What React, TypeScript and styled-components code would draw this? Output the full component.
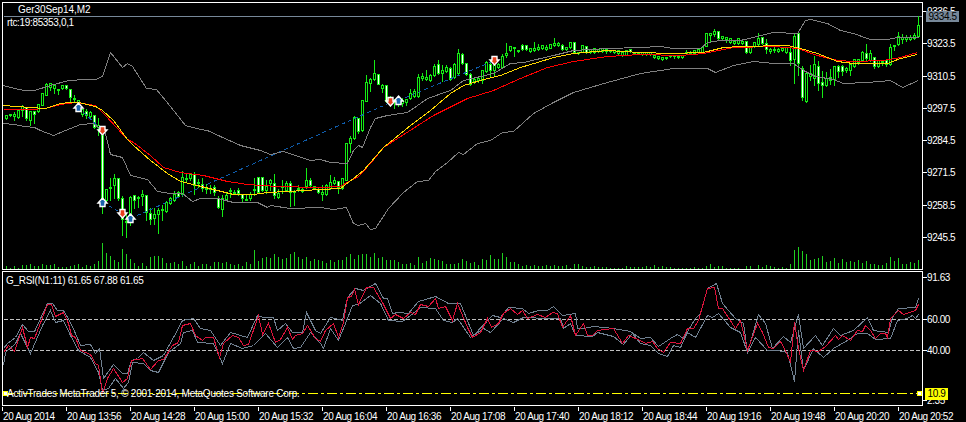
import styled, { createGlobalStyle } from "styled-components";

type Candle = [number, number, number, number, number]

// every bar is 4px wide, first one sits on x=6. [wick top, body top, body bottom, wick bottom, white body]
const candles: Candle[] = [
  [114,115,118,119,0],[114,114,115,116,0],[111,114,116,120,0],[110,110,117,118,0],[104,106,110,116,0],
  [106,107,118,120,1],[110,111,120,125,0],[110,111,114,123,1],[103,104,111,112,0],[93,93,105,105,0],
  [82,84,95,95,0],[82,83,87,90,0],[83,85,88,93,0],[88,89,90,94,0],[84,85,88,89,0],
  [84,85,88,89,1],[89,89,97,102,1],[94,98,99,101,0],[100,100,104,106,0],[108,109,114,116,0],
  [108,111,115,118,1],[110,112,116,118,0],[114,115,127,128,1],[117,125,127,135,0],[127,135,200,213,1],
  [189,189,200,202,0],[177,187,188,200,0],[173,178,185,198,0],[177,178,198,200,1],[195,198,219,235,1],
  [213,221,222,237,0],[195,197,215,225,0],[195,195,200,208,1],[195,197,198,207,0],[189,194,196,205,0],
  [194,195,212,220,1],[207,213,219,224,1],[207,214,218,224,0],[207,210,214,233,0],[204,209,210,220,0],
  [200,202,211,212,0],[196,198,203,204,0],[190,194,200,201,0],[190,192,196,197,1],[170,177,194,196,0],
  [172,178,179,181,0],[172,174,178,180,0],[171,174,185,194,1],[178,182,183,187,0],[177,184,188,191,1],
  [183,188,189,193,0],[184,188,189,193,0],[184,187,192,195,1],[195,198,207,208,1],[194,198,209,216,0],
  [192,195,199,200,0],[187,190,191,197,0],[189,192,193,194,0],[187,190,193,195,1],[193,194,198,201,1],
  [193,199,200,200,0],[191,194,198,200,0],[177,189,190,195,0],[176,177,192,193,1],[176,177,190,191,1],
  [179,186,190,193,0],[178,180,183,190,0],[173,183,195,198,1],[188,193,197,198,0],[179,186,187,193,0],
  [180,183,190,191,0],[180,183,192,206,1],[189,191,192,205,0],[184,188,189,191,0],[187,189,191,192,0],
  [167,180,186,188,0],[177,180,185,186,1],[185,186,188,189,1],[187,189,192,193,1],[184,192,194,200,0],
  [183,185,194,195,0],[174,182,188,189,0],[176,180,183,184,0],[180,181,187,193,1],[177,178,188,189,0],
  [142,143,180,180,0],[135,138,143,152,0],[115,117,138,139,0],[117,118,131,133,1],[100,100,130,131,0],
  [74,82,101,101,0],[77,79,83,91,0],[59,73,79,80,0],[73,74,84,84,1],[83,85,88,92,0],
  [85,85,101,102,1],[95,99,104,106,0],[98,101,102,108,0],[96,100,102,106,0],[97,100,103,106,0],
  [98,99,102,105,0],[88,93,98,99,0],[88,91,96,97,0],[73,77,96,97,0],[72,76,78,80,0],
  [69,77,79,80,0],[73,75,80,81,0],[63,66,75,76,0],[59,64,73,74,1],[64,70,73,81,0],
  [64,67,71,72,0],[66,68,79,80,1],[62,64,77,78,0],[48,53,73,74,0],[52,54,63,64,1],
  [62,63,74,75,1],[72,74,84,85,1],[76,79,81,83,0],[76,78,80,82,0],[70,70,80,83,0],
  [60,62,71,72,0],[60,64,70,76,1],[60,65,70,75,0],[62,64,67,68,0],[53,56,67,68,0],
  [42,53,55,57,0],[45,46,50,51,0],[46,47,48,56,0],[49,50,51,52,0],[43,45,49,50,1],
  [44,45,49,50,1],[47,48,51,52,0],[41,48,50,51,0],[43,47,49,50,0],[44,45,48,49,0],
  [44,47,49,50,0],[43,44,48,48,0],[37,43,45,46,0],[41,43,45,46,0],[43,45,49,50,1],
  [46,47,49,50,0],[41,42,47,48,0],[41,42,52,52,1],[51,52,53,54,0],[44,45,52,52,0],
  [45,46,52,53,1],[48,49,52,53,0],[47,48,52,53,0],[48,49,51,52,0],[47,48,51,52,0],
  [48,49,51,53,0],[49,50,51,52,0],[49,50,52,53,0],[50,50,53,55,0],[51,52,55,56,0],
  [50,50,55,55,0],[48,49,51,52,1],[51,52,53,53,0],[51,52,53,54,0],[51,52,54,55,0],
  [51,52,54,55,0],[51,52,54,55,0],[54,55,57,58,0],[55,56,58,59,0],[56,57,59,60,0],
  [56,57,58,59,0],[54,55,56,57,0],[54,55,56,58,0],[55,56,57,58,0],[54,55,57,58,0],
  [49,52,53,54,0],[50,53,54,54,0],[49,50,53,54,0],[48,49,52,53,0],[46,47,52,53,0],
  [33,33,46,46,0],[33,33,35,41,0],[28,31,34,36,0],[30,31,38,39,1],[35,36,38,40,0],
  [36,37,39,42,0],[37,38,42,43,0],[40,41,43,44,0],[38,38,43,44,0],[40,41,43,44,0],
  [40,41,52,53,1],[46,47,52,53,0],[41,42,46,47,0],[32,38,44,45,0],[36,37,43,44,1],
  [38,43,49,53,1],[47,49,51,53,0],[46,49,50,52,0],[47,49,51,52,0],[46,48,50,51,0],
  [46,47,52,53,0],[47,52,60,65,1],[33,36,59,83,0],[32,33,63,75,1],[65,68,97,100,1],
  [72,73,101,102,0],[64,73,76,80,0],[55,64,78,85,0],[60,66,83,90,1],[70,82,85,97,1],
  [71,78,85,86,0],[68,77,80,84,0],[65,66,79,85,0],[64,66,71,77,1],[64,66,71,75,1],
  [66,68,70,72,0],[62,64,70,75,0],[58,59,66,67,0],[58,59,62,64,0],[50,52,60,61,0],
  [43,53,58,61,1],[49,53,60,61,0],[57,57,66,68,1],[59,60,66,67,0],[60,61,62,65,0],
  [59,60,64,66,1],[43,47,64,65,0],[44,45,46,50,0],[31,36,44,45,0],[33,37,39,43,0],
  [34,37,39,41,0],[34,37,39,40,0],[32,35,38,39,0],[15,25,36,37,0],
]

const volumes = [
  3,1,3,1,4,4,5,3,3,5,4,4,5,2,2,2,3,4,5,2,4,3,5,8,
  26,16,13,9,7,20,15,10,6,3,6,3,12,13,13,11,6,6,7,5,8,3,5,7,3,5,5,3,7,7,6,7,5,4,5,3,7,5,19,8,11,12,11,15,12,10,11,15,17,12,10,12,8,10,9,
  8,6,9,7,9,9,12,15,10,14,15,15,12,16,11,12,9,9,9,7,5,5,6,4,12,6,8,11,10,9,8,5,5,5,6,10,8,6,7,4,10,9,14,10,10,16,12,7,7,5,3,4,3,4,3,3,4,3,4,3,3,4,1,5,5,3,2,2,3,2,2,2,1,1,1,1,3,2,2,2,
  2,3,2,4,2,3,2,2,1,1,1,1,1,2,1,1,3,5,2,3,3,1,1,1,1,0,3,3,0,4,2,4,3,2,1,2,1,5,19,22,18,15,9,10,11,13,7,8,11,6,10,7,8,7,9,6,8,5,5,4,4,6,12,8,11,5,5,7,6,9,
]

const upperBand = "3,85 14,88 24,90 34,90 50,85 68,80 85,79 95,79 102,76 110,52 122,67 127,63 132,66 146,88 156,89 170,106 185,125 200,129 207,130 220,136 240,145 260,150 270,154 283,151 310,160 320,159 330,162 347,163 353,150 358,145 362,147 370,127 375,118 387,115 407,112 420,103 427,98 450,90 463,80 493,73 510,63 523,62 553,55 573,50 607,48 640,47 660,46 673,48 700,48 707,42 720,40 740,40 773,32 797,33 805,20 810,19 827,23 840,30 853,33 870,39 887,39 897,37 918,37"
const lowerBand = "3,123 14,124 24,126 34,127 40,130 53,135 65,130 80,124 93,123 105,133 110,154 122,157 130,175 147,179 157,191 170,193 182,193 192,201 200,198 217,198 233,202 257,202 267,207 270,205 290,208 320,207 333,209 346,207 353,223 358,225 365,223 370,229 375,228 388,208 403,192 417,181 428,180 435,171 447,162 458,152 463,154 477,143 490,140 502,132 513,131 533,113 553,102 573,92 607,82 640,73 673,68 707,68 715,72 733,65 753,61 773,63 793,63 803,70 815,76 833,79 843,83 867,82 890,80 902,87 918,80"
const emaFast = "3,105 30,107 45,108 60,103 70,102 78,102 95,106 102,110 113,120 127,139 133,145 150,160 167,173 180,181 197,185 213,189 233,194 253,194 267,192 287,191 320,189 340,188 353,178 363,170 383,147 410,125 430,110 450,93 463,85 487,78 500,75 520,67 537,62 553,57 573,53 607,50 640,52 670,53 703,52 723,47 740,46 787,45 800,48 817,53 837,61 853,63 887,63 900,58 917,54"
const emaSlow = "3,109 30,109 45,108 60,104 75,102 95,105 105,115 127,139 133,142 150,155 163,167 180,172 203,175 227,181 247,184 277,186 320,187 340,186 350,180 357,177 370,163 383,147 433,115 467,98 493,90 520,78 547,67 573,61 607,56 640,54 680,55 703,53 733,47 773,46 797,48 817,55 837,60 853,61 883,60 900,57 917,52"
const tradeLines = ["78,107 102,130", "102,202 122,213", "130,218 390,102", "398,100 494,60"]

const rsiMain = "3,352 8,345 14,351 22,327 27,347 30,337 34,338 47,304 51,304 55,316 63,312 68,323 71,335 75,337 80,350 90,354 95,363 98,365 102,393 107,378 113,368 122,382 127,378 131,360 142,358 150,369 158,360 163,359 172,345 178,342 182,325 190,323 195,335 202,340 205,337 213,337 219,357 223,343 232,335 238,337 243,345 248,344 258,315 262,334 268,323 275,342 280,339 287,327 292,339 295,335 302,333 307,325 315,338 320,341 325,330 333,323 338,337 343,322 347,297 351,296 354,289 358,304 366,287 373,287 382,302 390,318 395,314 403,318 410,312 415,314 420,304 428,306 435,298 438,308 445,306 452,320 457,303 467,327 472,337 480,332 487,318 491,327 498,323 503,313 510,308 517,314 522,310 527,318 537,314 545,317 552,312 557,313 562,327 570,315 575,335 583,323 587,335 592,335 597,330 613,328 622,343 628,335 640,340 645,343 652,341 657,348 663,352 670,342 680,343 687,328 693,328 698,320 707,288 714,287 718,308 722,308 735,328 740,320 747,350 757,323 762,332 768,347 773,348 780,341 785,350 790,362 794,322 798,348 803,370 810,350 818,351 825,346 835,335 838,339 842,335 850,340 857,330 862,331 865,325 870,330 875,338 880,333 885,333 887,337 890,318 898,310 903,314 915,310 918,304"
const rsiUpper = "3,348 7,343 15,337 22,324 28,331 34,331 47,303 52,303 57,310 63,310 70,322 75,333 80,345 90,344 95,353 99,348 103,378 113,364 122,373 127,373 131,360 137,358 143,352 153,360 163,355 173,337 182,320 193,318 200,328 210,330 220,345 230,332 247,337 257,315 263,317 273,317 277,330 285,323 292,332 302,332 306,312 315,330 320,333 330,317 335,318 342,320 347,297 355,288 363,290 375,283 383,298 387,298 392,313 398,312 408,313 418,301 425,299 435,296 448,303 460,303 473,335 492,315 500,317 508,307 522,308 528,313 538,310 547,310 553,306 562,315 575,313 577,328 583,328 593,326 613,328 630,331 640,338 650,337 658,346 670,338 677,334 683,338 695,318 700,313 707,288 716,283 722,303 735,318 743,323 747,352 758,314 765,323 772,348 783,336 790,342 798,314 803,348 815,335 822,345 833,328 840,335 853,330 867,317 873,330 888,332 892,317 898,308 915,307 918,298"
const rsiLower = "3,365 5,352 15,343 20,333 30,353 42,325 50,310 55,322 63,320 70,335 78,350 90,357 98,372 102,390 108,388 115,378 123,388 128,382 132,362 143,363 150,370 158,372 168,352 180,343 183,332 192,330 197,342 213,343 222,363 230,343 242,348 253,345 265,333 277,347 287,337 293,348 300,347 310,332 320,343 323,348 330,328 338,340 345,323 352,305 358,304 370,295 380,303 388,320 402,321 410,315 420,307 435,308 443,320 452,322 457,318 470,337 483,328 490,332 503,318 513,322 523,317 547,318 560,318 563,328 570,323 575,335 592,336 597,332 613,336 623,344 632,333 640,343 650,345 658,353 667,356 673,345 680,347 687,332 695,337 707,315 712,317 718,313 730,327 740,332 747,352 755,337 767,350 777,350 787,352 794,381 798,330 803,370 813,348 823,357 833,348 847,340 857,333 867,333 875,339 890,338 897,320 907,318 912,315 915,318 918,314"

const priceLabels = ["9336.5", "9323.5", "9310.5", "9297.5", "9284.5", "9271.5", "9258.5", "9245.5"]
const rsiLabels = [
  { text: "91.63", gap: 0 },
  { text: "60.00", gap: 29 },
  { text: "40.00", gap: 18 },
  { text: "2.35", gap: 37 },
]
const times = [
  "20 Aug 2014", "20 Aug 13:56", "20 Aug 14:28", "20 Aug 15:00", "20 Aug 15:32",
  "20 Aug 16:04", "20 Aug 16:36", "20 Aug 17:08", "20 Aug 17:40", "20 Aug 18:12",
  "20 Aug 18:44", "20 Aug 19:16", "20 Aug 19:48", "20 Aug 20:20", "20 Aug 20:52",
]

const Arrow = ({ x, y, up }: { x: number; y: number; up?: boolean }) => (
  <path
    transform={`translate(${x},${y})${up ? "" : " rotate(180)"}`}
    d="M0,-4.5 L4.5,0.5 L2.5,0.5 L2.5,4 L-2.5,4 L-2.5,0.5 L-4.5,0.5 Z"
    fill={up ? "#1a62ac" : "#e8401c"}
    stroke="#fff"
    strokeWidth="1.4"
    shapeRendering="auto"
  />
)

const PriceChart = () => (
  <ChartSvg width="919" height="266" viewBox="3 3 919 266">
    <g transform="translate(.5,.5)" shapeRendering="crispEdges">
      <line x1="3" y1="16" x2="921" y2="16" stroke="#778899" />
      {volumes.map((v, i) => (
        <line key={i} x1={6 + i * 4} y1={268} x2={6 + i * 4} y2={268 - v} stroke="#1fd01f" />
      ))}
      {candles.map(([wt, bt, bb, wb, white], i) => {
        const x = 6 + i * 4
        return (
          <g key={i}>
            <line x1={x} y1={wt} x2={x} y2={wb} stroke="#14ec14" />
            <rect x={x - 1} y={bt} width="2" height={Math.max(bb - bt, 1)} fill={white ? "#fff" : "#000"} stroke="#14ec14" />
          </g>
        )
      })}
      {tradeLines.map((points) => (
        <polyline key={points} points={points} fill="none" stroke="#0f5cab" strokeDasharray="4 3" />
      ))}
      <polyline points={upperBand} fill="none" stroke="#808080" />
      <polyline points={lowerBand} fill="none" stroke="#808080" />
      <polyline points={emaSlow} fill="none" stroke="#ff0000" />
      <polyline points={emaFast} fill="none" stroke="#ffd700" />
      <Arrow x={78} y={107} up />
      <Arrow x={102} y={130} />
      <Arrow x={102} y={202} up />
      <Arrow x={122} y={213} />
      <Arrow x={130} y={218} up />
      <Arrow x={390} y={101} />
      <Arrow x={398} y={100} up />
      <Arrow x={494} y={60} />
    </g>
  </ChartSvg>
)

const RsiChart = () => (
  <ChartSvg width="919" height="133" viewBox="3 272 919 133">
    <g transform="translate(.5,.5)" shapeRendering="crispEdges">
      <line x1="3" y1="319" x2="921" y2="319" stroke="#c0c0c0" strokeDasharray="4 2" />
      <line x1="3" y1="350" x2="921" y2="350" stroke="#c0c0c0" strokeDasharray="4 2" />
      <polyline points={rsiUpper} fill="none" stroke="#708090" />
      <polyline points={rsiLower} fill="none" stroke="#708090" />
      <polyline points={rsiMain} fill="none" stroke="#dc143c" />
      <line x1="3" y1="393" x2="918" y2="393" stroke="#ffff00" strokeDasharray="10 3 3 3" />
      <rect x="3" y="391" width="4" height="4" fill="#fff" stroke="#ffff00" />
      <rect x="917" y="391" width="4" height="4" fill="#fff" stroke="#ffff00" />
    </g>
  </ChartSvg>
)

export default function App() {
  return (
    <>
      <GlobalStyle />
      <Terminal>
        <PricePane>
          <PriceChart />
          <PriceLegend>
            <Symbol>Ger30Sep14,M2</Symbol>
            <Comment>rtc:19:85353,0,1</Comment>
          </PriceLegend>
        </PricePane>
        <PriceScale>
          {priceLabels.map((p) => (
            <PriceTick key={p}>{p}</PriceTick>
          ))}
          <BidTag>9334.5</BidTag>
        </PriceScale>

        <RsiPane>
          <RsiChart />
          <RsiLegend>G_RSI(N1:11) 61.65 67.88 61.65</RsiLegend>
          <Copyright>ActivTrades MetaTrader 5, © 2001-2014, MetaQuotes Software Corp.</Copyright>
        </RsiPane>
        <RsiScale>
          {rsiLabels.map((l) => (
            <RsiTick key={l.text} $gap={l.gap}>{l.text}</RsiTick>
          ))}
          <LevelTag>10.9</LevelTag>
        </RsiScale>

        <TimeScale>
          {times.map((t) => (
            <TimeTick key={t}>{t}</TimeTick>
          ))}
        </TimeScale>
      </Terminal>
    </>
  )
}

const GlobalStyle = createGlobalStyle`
  html, body {
    margin: 0;
    background: #000;
  }
  body {
    font-family: "Liberation Sans", Arial, sans-serif;
    font-size: 10px;
    color: #fff;
  }
`

const Terminal = styled.div`
  display: grid;
  grid-template-columns: 921px 43px;
  grid-template-rows: 268px 135px auto;
  row-gap: 1px;
  width: 966px;
  height: 422px;
  box-sizing: border-box;
  padding: 2px 0 0 2px;
  overflow: hidden;
  background: #000;
`

const PricePane = styled.div`
  position: relative;
  box-sizing: border-box;
  border: 1px solid #fff;
`

const RsiPane = styled(PricePane)``

const ChartSvg = styled.svg`
  display: block;
`

const PriceLegend = styled.div`
  position: absolute;
  top: 0;
  left: 4px;
  display: flex;
  flex-direction: column;
  gap: 1px;
  line-height: 12px;
  padding-top: 1px;
`

const Symbol = styled.div`
  margin-left: 11px;
  letter-spacing: -0.06px;
`

const Comment = styled.div`
  letter-spacing: -0.34px;
`

const RsiLegend = styled.div`
  position: absolute;
  top: 3px;
  left: 3px;
  line-height: 12px;
  letter-spacing: -0.28px;
`

const Copyright = styled.div`
  position: absolute;
  top: 116px;
  left: 4px;
  line-height: 12px;
  letter-spacing: -0.24px;
  white-space: nowrap;
`

const PriceScale = styled.div`
  position: relative;
  display: flex;
  flex-direction: column;
  gap: 19.25px;
  padding-top: 3px;
`

const PriceTick = styled.div`
  position: relative;
  height: 13px;
  line-height: 13px;
  padding-left: 4px;
  letter-spacing: -0.4px;

  &::before {
    content: "";
    position: absolute;
    left: 0;
    top: 6px;
    width: 4px;
    height: 1px;
    background: #fff;
  }
`

const BidTag = styled.div`
  position: absolute;
  top: 9px;
  left: 3px;
  width: 33px;
  height: 11px;
  line-height: 11px;
  text-align: center;
  background: #778899;
  color: #000;
  letter-spacing: -0.4px;
`

const RsiScale = styled.div`
  position: relative;
  display: flex;
  flex-direction: column;
`

const RsiTick = styled(PriceTick)<{ $gap: number }>`
  margin-top: ${(p) => p.$gap}px;
`

const LevelTag = styled.div`
  position: absolute;
  top: 117px;
  left: 2px;
  width: 23px;
  height: 12px;
  line-height: 12px;
  text-align: center;
  background: #ffff00;
  color: #000;
  letter-spacing: -0.4px;
`

const TimeScale = styled.div`
  grid-column: 1 / -1;
  display: flex;
`

const TimeTick = styled.div`
  position: relative;
  box-sizing: border-box;
  flex: 0 0 64px;
  padding: 3px 0 0 1px;
  line-height: 13px;
  letter-spacing: -0.4px;
  white-space: nowrap;

  &::before {
    content: "";
    position: absolute;
    left: 0;
    top: 0;
    width: 1px;
    height: 4px;
    background: #fff;
  }
`
